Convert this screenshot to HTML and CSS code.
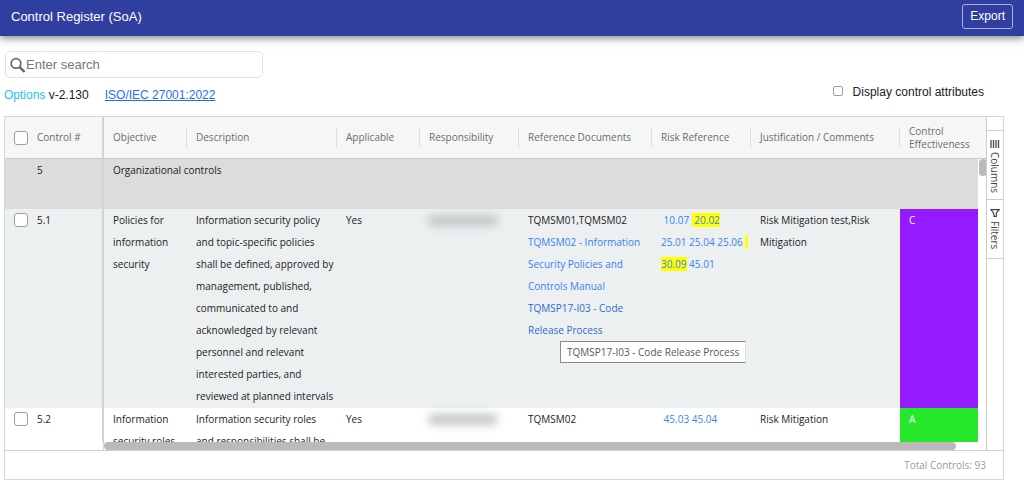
FILE: index.html
```
<!DOCTYPE html>
<html lang="en">
<head>
<meta charset="utf-8">
<title>Control Register (SoA)</title>
<link rel="stylesheet" href="styles.css">
</head>
<body>
<header class="topbar">
  <h1 class="topbar-title">Control Register (SoA)</h1>
  <button class="export" type="button">Export</button>
</header>
<main class="page">
  <label class="search">
    <svg class="search-icon" viewBox="0 0 16 16" aria-hidden="true"><circle cx="6" cy="6.4" r="4.8" fill="none" stroke="#666" stroke-width="1.7"/><path d="M9.5 9.9L14.6 15" stroke="#666" stroke-width="2.4"/></svg>
    <input class="search-input" type="text" placeholder="Enter search" aria-label="Enter search">
  </label>
  <div class="options">
    <div class="options-left">
      <span><a class="options-link" href="#">Options</a> v-2.130</span>
      <a class="standard-link" href="#">ISO/IEC 27001:2022</a>
    </div>
    <label class="attributes"><input class="check check-small" type="checkbox">Display control attributes</label>
  </div>
  <section class="grid">
    <div class="grid-main">
      <div class="grid-content">
        <div class="viewport">
          <table class="table">
            <colgroup>
              <col class="c-control"><col class="c-objective"><col class="c-description"><col class="c-applicable"><col class="c-responsibility"><col class="c-documents"><col class="c-risk"><col class="c-comments"><col class="c-effect"><col class="c-scroll">
            </colgroup>
            <thead>
              <tr>
                <th class="pinned"><label class="pick"><input class="check" type="checkbox">Control #</label></th>
                <th><span class="head">Objective</span></th>
                <th><span class="head">Description</span></th>
                <th><span class="head">Applicable</span></th>
                <th><span class="head">Responsibility</span></th>
                <th><span class="head">Reference Documents</span></th>
                <th><span class="head">Risk Reference</span></th>
                <th><span class="head">Justification / Comments</span></th>
                <th colspan="2"><span class="head head-last">Control Effectiveness</span></th>
              </tr>
            </thead>
            <tbody>
              <tr class="group">
                <td class="pinned"><span class="group-number">5</span></td>
                <td colspan="8">Organizational controls</td>
                <td class="track" rowspan="3"><div class="thumb"></div></td>
              </tr>
              <tr class="tall">
                <td class="pinned"><label class="pick"><input class="check" type="checkbox">5.1</label></td>
                <td>Policies for information security</td>
                <td>Information security policy and topic-specific policies shall be defined, approved by management, published, communicated to and acknowledged by relevant personnel and relevant interested parties, and reviewed at planned intervals</td>
                <td>Yes</td>
                <td><div class="redacted"></div></td>
                <td>TQMSM01,TQMSM02
                  <a class="doc" href="#">TQMSM02 - Information Security Policies and Controls Manual</a>
                  <a class="doc doc-active" href="#">TQMSP17-I03 - Code Release Process<span class="tooltip" role="tooltip">TQMSP17-I03 - Code Release Process</span></a>
                </td>
                <td class="risk">&nbsp;<a href="#">10.07</a> <mark>&nbsp;<a href="#">20.02</a></mark><br><a href="#">25.01</a> <a href="#">25.04</a> <a href="#">25.06</a> <mark>&nbsp;</mark><br><mark><a href="#">30.09</a></mark> <a href="#">45.01</a></td>
                <td>Risk Mitigation test,Risk Mitigation</td>
                <td class="rating rating-c">C</td>
              </tr>
              <tr class="tall plain">
                <td class="pinned"><label class="pick"><input class="check" type="checkbox">5.2</label></td>
                <td>Information security roles</td>
                <td>Information security roles and responsibilities shall be</td>
                <td>Yes</td>
                <td><div class="redacted"></div></td>
                <td>TQMSM02</td>
                <td class="risk">&nbsp;<a href="#">45.03</a> <a href="#">45.04</a></td>
                <td>Risk Mitigation</td>
                <td class="rating rating-a">A</td>
              </tr>
            </tbody>
          </table>
        </div>
        <div class="hscroll"><div class="hscroll-pinned"></div><div class="hscroll-track"><div class="hscroll-thumb"></div></div></div>
      </div>
      <aside class="sidebar">
        <button class="tab tab-columns" type="button">
          <svg class="tab-icon" viewBox="0 0 10 8" aria-hidden="true"><path d="M1 0V8M3.5 0V8M6 0V8M8.5 0V8" stroke="#555" stroke-width="1.4"/></svg>
          Columns</button>
        <button class="tab tab-filters" type="button">
          <svg class="tab-icon" viewBox="0 0 10 8" aria-hidden="true"><path d="M1 .7H9L6.3 4.2V7.3H4L3.6 4.2Z" fill="none" stroke="#444" stroke-width="1.2"/></svg>
          Filters</button>
      </aside>
    </div>
    <footer class="status">Total Controls: 93</footer>
  </section>
</main>
</body>
</html>
```
FILE: styles.css
```
* { box-sizing: border-box; }

body {
  margin: 0;
  height: 100vh;
  display: flex;
  flex-direction: column;
  background: #fff;
  color: #222;
  font-family: "Liberation Sans", Arial, sans-serif;
  font-size: 12px;
}

a { text-decoration: none; }

.topbar {
  display: flex;
  align-items: center;
  justify-content: space-between;
  flex: none;
  height: 36px;
  padding: 0 11px 4px;
  background: #303f9f;
  color: #fff;
  box-shadow: 0 2px 8px rgba(0, 0, 0, .5);
}

.topbar-title { margin: 0; font-size: 13px; font-weight: 400; }

.export {
  height: 25px;
  padding: 0 7px;
  border: 1px solid #a9b0dc;
  border-radius: 3px;
  background: transparent;
  color: #fff;
  font: 12px "Liberation Sans", Arial, sans-serif;
}

.page {
  flex: 1;
  min-height: 0;
  display: flex;
  flex-direction: column;
  padding: 15px 20px 7px 4px;
}

.search {
  display: flex;
  align-items: center;
  flex: none;
  width: 258px;
  height: 27px;
  margin-left: 1px;
  padding: 0 4px;
  border: 1px solid #dfe1e5;
  border-radius: 5px;
}

.search-icon { flex: none; width: 16px; height: 16px; }

.search-input {
  flex: 1;
  min-width: 0;
  padding: 0;
  border: 0;
  outline: 0;
  background: none;
  font: 13px "Liberation Sans", Arial, sans-serif;
}

.search-input::placeholder { color: #777; }

.options {
  display: flex;
  justify-content: space-between;
  flex: none;
  height: 38px;
  padding: 6px 20px 0 0;
  line-height: 16px;
}

.options-left { display: flex; gap: 16px; padding-top: 3px; }
.options-link { color: #22c3ee; }
.standard-link { color: #1d72f3; text-decoration: underline; }

.attributes { display: flex; gap: 10px; }

.check {
  appearance: none;
  flex: none;
  width: 14px;
  height: 14px;
  margin: 0;
  border: 1px solid #999fa2;
  border-radius: 3px;
  background: #fff;
}

.check-small { width: 10px; height: 10px; margin-top: 2px; border-radius: 2px; }

.grid {
  flex: 1;
  min-height: 0;
  display: flex;
  flex-direction: column;
  border: 1px solid #d4d8da;
  font-family: "Open Sans", sans-serif;
  font-size: 10px;
}

.grid-main { flex: 1; min-height: 0; display: flex; }

.grid-content {
  flex: 1;
  min-width: 0;
  display: flex;
  flex-direction: column;
}

.viewport { flex: 1; min-height: 0; overflow: hidden; }

.table {
  width: 100%;
  table-layout: fixed;
  border-collapse: separate;
  border-spacing: 0;
}

.c-control { width: 99px; }
.c-objective { width: 83px; }
.c-description { width: 150px; }
.c-applicable { width: 83px; }
.c-responsibility { width: 99px; }
.c-documents { width: 133px; }
.c-risk { width: 99px; }
.c-comments { width: 149px; }
.c-effect { width: 78px; }
.c-scroll { width: 9px; }

th {
  height: 42px;
  padding: 0;
  border-bottom: 1px solid #c9ced1;
  background: #f5f7f7;
  color: #6c6c6c;
  font-weight: 500;
  line-height: 13px;
  text-align: left;
}

.head {
  display: flex;
  align-items: center;
  height: 21px;
  padding-left: 9px;
  border-right: 1px solid #dcdfe0;
}

.head-last { height: auto; padding-right: 10px; border: 0; }

td {
  padding: 0 2px 0 9px;
  border-top: 1px solid #e0e4e6;
  background: #ecf0f1;
  line-height: 22px;
  vertical-align: top;
}

.pinned {
  padding: 0 0 0 9px;
  border-right: 2px solid #cfd4d7;
}

.pick { display: flex; align-items: center; gap: 9px; }

.group td { height: 50px; border-top: 0; background: #dcdcdc; }
.group-number { padding-left: 23px; }
.tall td { height: 199px; border-top: 0; }
.plain td { background: #fff; }
.group .track { padding: 0 0 0 1px; background: #fff; }

.thumb { width: 8px; height: 17px; border-radius: 4px; background: #bababa; }

.redacted {
  height: 11px;
  margin: 6px 20px 0 0;
  background: #c4c7c8;
  filter: blur(4px);
}

.doc { display: block; color: #3b82f6; }
.doc-active { position: relative; color: #2f6bd0; }

.tooltip {
  position: absolute;
  top: 100%;
  left: 32px;
  z-index: 1;
  padding: 0 6px;
  border: 1px solid #8a8a8a;
  border-right-color: #ddd;
  background: #fff;
  color: #575757;
  line-height: 20px;
  white-space: nowrap;
}

.risk { padding-right: 0; white-space: nowrap; }
.risk a { color: #3b82f6; }
mark { background: #ff0; color: inherit; }

.tall .rating { color: #fff; }
.tall .rating-c { background: #961aff; }
.tall .rating-a { background: #25e82a; }

.hscroll { display: flex; flex: none; height: 8px; }
.hscroll-pinned { width: 99px; border-right: 1px solid #cfd4d7; }
.hscroll-track { flex: 1; padding-right: 30px; }
.hscroll-thumb { height: 8px; border-radius: 4px; background: #bababa; }

.sidebar {
  flex: none;
  width: 17px;
  padding-top: 13px;
  border-left: 1px solid #c9ced1;
}

.tab {
  display: flex;
  align-items: center;
  gap: 4px;
  width: 16px;
  padding: 9px 0;
  border: 0;
  border-top: 1px solid #c9ced1;
  background: none;
  color: #444;
  font: 10px "Open Sans", sans-serif;
  line-height: 16px;
  writing-mode: vertical-rl;
}

.tab-columns { height: 69px; }
.tab-filters { height: 60px; border-bottom: 1px solid #c9ced1; }
.tab-icon { flex: none; width: 10px; height: 8px; }

.status {
  flex: none;
  height: 29px;
  padding-right: 17px;
  border-top: 1px solid #c9ced1;
  color: #999;
  line-height: 29px;
  text-align: right;
}
```
